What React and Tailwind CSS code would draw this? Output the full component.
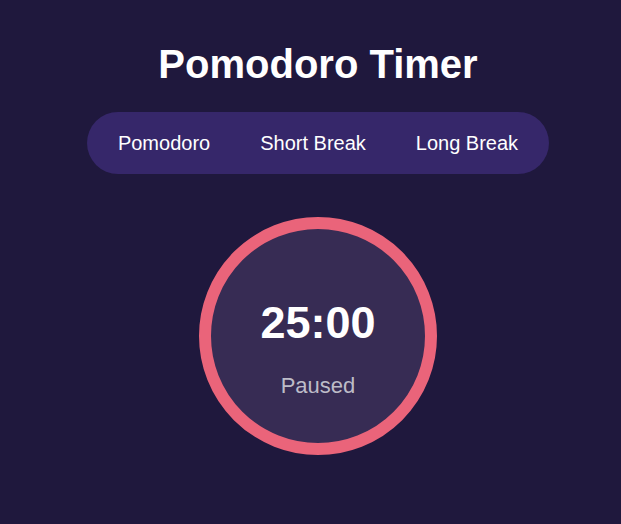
export default function App() {
  return (
    <div className="min-h-[524px] w-full bg-[#1f183d] overflow-hidden" style={{ fontFamily: '"Liberation Sans", Arial, sans-serif' }}>
      <div className="w-[636px] flex flex-col items-center pt-[41px]">
        <h1 className="text-[40px] leading-[46px] font-bold text-white">Pomodoro Timer</h1>
        <div className="mt-[25px] h-[62px] flex items-center p-[6px] rounded-full bg-[#36276a]">
          <button className="h-[50px] px-[25px] text-[20px] text-white rounded-full">Pomodoro</button>
          <button className="h-[50px] px-[25px] text-[20px] text-white rounded-full">Short Break</button>
          <button className="h-[50px] px-[25px] text-[20px] text-white rounded-full">Long Break</button>
        </div>
        <div className="mt-[43px] w-[238px] h-[238px] rounded-full border-[12px] border-[#ea647a] bg-[#372c54] flex flex-col items-center pt-[68px]">
          <div className="text-[45px] leading-[52px] font-bold text-white">25:00</div>
          <div className="mt-[24px] text-[22px] leading-[25px] text-[#bdbcc8]">Paused</div>
        </div>
      </div>
    </div>
  );
}
